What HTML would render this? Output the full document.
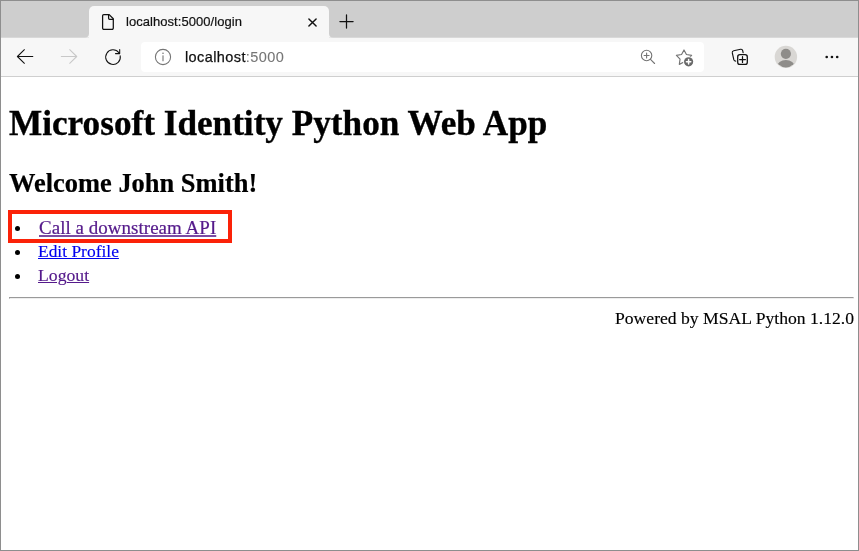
<!DOCTYPE html>
<html>
<head>
<meta charset="utf-8">
<title>localhost:5000/login</title>
<style>
html,body{margin:0;padding:0;}
body{width:859px;height:551px;overflow:hidden;background:#fff;position:relative;font-family:"Liberation Serif",serif;color:#000;}
#frame{position:absolute;left:0;top:0;width:857px;height:549px;border:1px solid #8e8e8e;z-index:50;pointer-events:none;}
#tabbar{position:absolute;left:0;top:0;width:859px;height:37px;background:#cecece;border-bottom:1px solid #d9d9d9;}
#tab{position:absolute;left:89px;top:6px;width:240px;height:32px;background:#f7f7f7;border-radius:5px 5px 0 0;}
#tabtitle{position:absolute;left:126px;top:14px;letter-spacing:.05px;-webkit-text-stroke:.2px #111;font:13px/16px "Liberation Sans",sans-serif;color:#111;white-space:nowrap;}
#toolbar{position:absolute;left:0;top:38px;width:859px;height:38px;background:#f7f7f7;border-bottom:1px solid #cfcfcf;}
#addr{position:absolute;left:141px;top:42px;width:563px;height:30px;background:#fff;border-radius:4px;}
#url{position:absolute;left:184.7px;top:48px;letter-spacing:.4px;-webkit-text-stroke:.25px #111;font:14.5px/18px "Liberation Sans",sans-serif;color:#111;white-space:nowrap;}
#url span{color:#767676;-webkit-text-stroke:.1px #767676;}
#content{position:absolute;left:0;top:77px;width:859px;height:474px;background:#fff;}
h1{position:absolute;left:8.5px;top:102.5px;margin:0;font-size:35.2px;-webkit-text-stroke:.35px #000;line-height:42px;font-weight:bold;white-space:nowrap;}
h2{position:absolute;left:9px;top:166.5px;margin:0;font-size:26.45px;-webkit-text-stroke:.2px #000;line-height:32px;font-weight:bold;white-space:nowrap;}
.li{position:absolute;font-size:17.7px;line-height:22px;white-space:nowrap;}
.li a{color:#0000ee;text-decoration:underline;text-decoration-thickness:1.25px;-webkit-text-stroke:.16px #0000ee;}
.li a.v{color:#551a8b;-webkit-text-stroke-color:#551a8b;}
.li a.big{-webkit-text-stroke-width:.22px;text-decoration-thickness:2px;text-decoration-color:rgba(85,26,139,.78);}
.dot{position:absolute;width:5.2px;height:5.2px;border-radius:50%;background:#000;}
#hl{position:absolute;left:8px;top:210px;width:216px;height:25px;border:4px solid #fb2208;}
#hr{position:absolute;left:9px;top:297px;width:843px;height:0;border-top:1px solid #9a9a9a;border-left:1px solid #9a9a9a;border-bottom:1px solid #eee;border-right:1px solid #eee;}
#foot{position:absolute;right:5.3px;top:307px;font-size:17.62px;-webkit-text-stroke:.15px #000;line-height:22px;white-space:nowrap;}
svg{position:absolute;overflow:visible;}
h1,h2,.li,#foot,#url,#tabtitle{will-change:transform;}
</style>
</head>
<body>
<div id="tabbar"></div>
<div id="tab"></div>
<div id="tabtitle">localhost:5000/login</div>
<div id="toolbar"></div>
<div id="addr"></div>
<div id="url">localhost<span>:5000</span></div>
<svg id="icons" width="859" height="77" viewBox="0 0 859 77" style="left:0;top:0" fill="none" stroke-linecap="round" stroke-linejoin="round">
<!-- tab concave corners -->
<path d="M85 37.5 h4 v-4 a4 4 0 0 1 -4 4z" fill="#f7f7f7" stroke="none"/>
<path d="M333 37.5 h-4 v-4 a4 4 0 0 0 4 4z" fill="#f7f7f7" stroke="none"/>
<!-- page icon -->
<g stroke="#111" stroke-width="1.25">
<path d="M103.8 14.6 H109.2 L113.3 18.7 V28.1 a1.2 1.2 0 0 1 -1.2 1.2 H103.8 a1.2 1.2 0 0 1 -1.2 -1.2 V15.8 a1.2 1.2 0 0 1 1.2 -1.2z"/>
<path d="M108.6 14.9 V18.3 a1 1 0 0 0 1 1 H113"/>
</g>
<!-- close -->
<path d="M308.9 18.9 l7.2 7.2 M316.1 18.9 l-7.2 7.2" stroke="#111" stroke-width="1.45"/>
<!-- plus -->
<path d="M339.9 21.5 h13.2 M346.5 14.9 v13.2" stroke="#111" stroke-width="1.25"/>
<!-- back -->
<path d="M17.4 56.5 h15.4 M24.4 49.7 l-7 6.8 l7 6.8" stroke="#111" stroke-width="1.05"/>
<!-- forward -->
<path d="M61.3 56.5 h15.4 M69.7 49.7 l7 6.8 l-7 6.8" stroke="#c8c8c8" stroke-width="1.05"/>
<!-- refresh -->
<path d="M118.9 52.8 A7.3 7.3 0 1 0 120.2 55.8 M119.7 49.5 v4.1 h-4.2" stroke="#111" stroke-width="1.05"/>
<!-- info -->
<g stroke="#757575" stroke-width="1.1">
<circle cx="163" cy="57" r="7.6"/>
<path d="M163 55.8 v5"/>
</g>
<circle cx="163" cy="53.2" r="0.8" fill="#757575" stroke="none"/>
<!-- zoom -->
<g stroke="#747474" stroke-width="1.1">
<circle cx="646.6" cy="55.5" r="5.2"/>
<path d="M650.5 59.4 l4.1 4.1 M644.1 55.5 h5 M646.6 53 v5"/>
</g>
<!-- star -->
<path d="M684.00 49.90 L686.44 54.54 L691.61 55.43 L687.95 59.18 L688.70 64.37 L684.00 62.05 L679.30 64.37 L680.05 59.18 L676.39 55.43 L681.56 54.54z" stroke="#747474" stroke-width="1.15"/>
<circle cx="688.6" cy="61.8" r="5.5" fill="#fff" stroke="none"/>
<circle cx="688.6" cy="61.8" r="4.6" fill="#696969" stroke="none"/>
<path d="M686.4 61.8 h4.4 M688.6 59.6 v4.4" stroke="#fff" stroke-width="1.5"/>
<!-- collections -->
<g stroke="#111" stroke-width="1.15">
<path d="M735.7 61.05 a1.8 1.8 0 0 1 -1.9 -1.35 l-1.5 -6.8 a1.8 1.8 0 0 1 1.4 -2.1 l6.9 -1.5 a1.8 1.8 0 0 1 2.1 1.4 l.4 1.9"/>
<rect x="737.7" y="54.7" width="9.6" height="9.7" rx="2.2" fill="#fcfcfc" stroke-width="1.3"/>
<path d="M739.6 59.55 h5.8 M742.5 56.65 v5.8" stroke-width="1.25"/>
</g>
<!-- avatar -->
<clipPath id="av"><circle cx="785.9" cy="56.9" r="10.5"/></clipPath>
<circle cx="785.9" cy="56.9" r="11.2" fill="#d9d7d4" stroke="none"/>
<circle cx="785.9" cy="53.8" r="5.1" fill="#8e8c89" stroke="none"/>
<ellipse cx="785.9" cy="66.6" rx="8.9" ry="6.6" fill="#8e8c89" stroke="none" clip-path="url(#av)"/>
<!-- dots -->
<g fill="#111" stroke="none"><circle cx="826.7" cy="56.95" r="1.3"/><circle cx="831.95" cy="56.95" r="1.3"/><circle cx="837.2" cy="56.95" r="1.3"/></g>
</svg>
<div id="content"></div>
<h1>Microsoft Identity Python Web App</h1>
<h2>Welcome John Smith!</h2>
<div class="dot" style="left:14.7px;top:225.6px"></div>
<div class="dot" style="left:14.8px;top:249.7px"></div>
<div class="dot" style="left:14.8px;top:273.9px"></div>
<div class="li" style="left:38.7px;top:217px;font-size:18.95px;letter-spacing:.05px"><a class="v big">Call a downstream API</a></div>
<div class="li" style="left:38.4px;top:240px;font-size:17.45px"><a>Edit Profile</a></div>
<div class="li" style="left:38.4px;top:264px"><a class="v">Logout</a></div>
<div id="hl"></div>
<div id="hr"></div>
<div id="foot">Powered by MSAL Python 1.12.0</div>
<div id="frame"></div>
</body>
</html>
